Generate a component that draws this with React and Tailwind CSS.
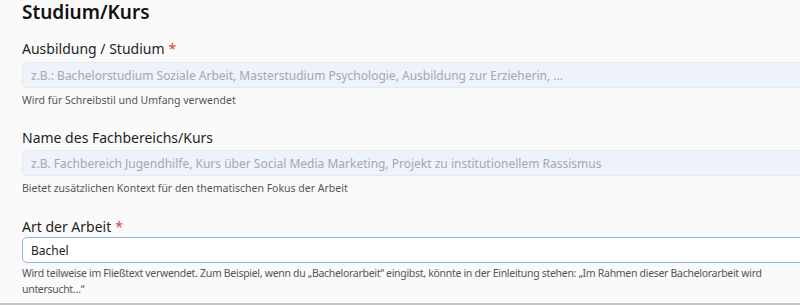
import React, { useState } from "react";

const font = { fontFamily: '"Noto Sans", "Open Sans", sans-serif' };

const Field = ({ label, required, placeholder, help, value, focused, top, gap, helpGap, helpClass = "" }) => (
  <div className={top}>
    <label className="block text-[14px] leading-5 text-[#1f1f1f]">
      {label}
      {required && <span className="text-[#d9433b] ml-1">*</span>}
    </label>
    <input
      readOnly
      value={value}
      placeholder={placeholder}
      className={`${gap} block w-[790px] h-[26px] rounded-[5px] px-[8px] text-[12px] outline-none placeholder:text-[#a3a8b1] ${
        focused
          ? "bg-white border border-[#8db8e9] text-[#222] caret-[#222]"
          : "bg-[#eef2f9] border border-[#e4e9f1] text-[#222]"
      }`}
      style={font}
    />
    <p className={`${helpGap} ${helpClass} text-[10.5px] leading-4 text-[#555]`}>{help}</p>
  </div>
);

export default function App() {
  const [value] = useState("Bachel");
  return (
    <div className="w-[800px] h-[305px] overflow-hidden bg-[#fafafa] border-b-2 border-[#c4c4c4]" style={font}>
      <div className="pl-[22px]">
        <h2 className="text-[19px] leading-6 font-semibold text-[#111]">Studium/Kurs</h2>
        <Field
          top="mt-[15px]"
          gap="mt-[3px]"
          helpGap="mt-[4px]"
          label="Ausbildung / Studium"
          required
          placeholder="z.B.: Bachelorstudium Soziale Arbeit, Masterstudium Psychologie, Ausbildung zur Erzieherin, ..."
          help="Wird für Schreibstil und Umfang verwendet"
        />
        <Field
          top="mt-[20px]"
          gap="mt-[2px]"
          helpGap="mt-[4px]"
          label="Name des Fachbereichs/Kurs"
          placeholder="z.B. Fachbereich Jugendhilfe, Kurs über Social Media Marketing, Projekt zu institutionellem Rassismus"
          help="Bietet zusätzlichen Kontext für den thematischen Fokus der Arbeit"
        />
        <Field
          top="mt-[21px]"
          gap="mt-0"
          helpGap="mt-[2px]"
          helpClass="tracking-[-0.3px] whitespace-nowrap"
          label="Art der Arbeit"
          required
          value={value}
          focused
          help={
            <>
              Wird teilweise im Fließtext verwendet. Zum Beispiel, wenn du „Bachelorarbeit“ eingibst, könnte in der Einleitung stehen: „Im Rahmen dieser Bachelorarbeit wird
              <br />
              untersucht…“
            </>
          }
        />
      </div>
    </div>
  );
}
